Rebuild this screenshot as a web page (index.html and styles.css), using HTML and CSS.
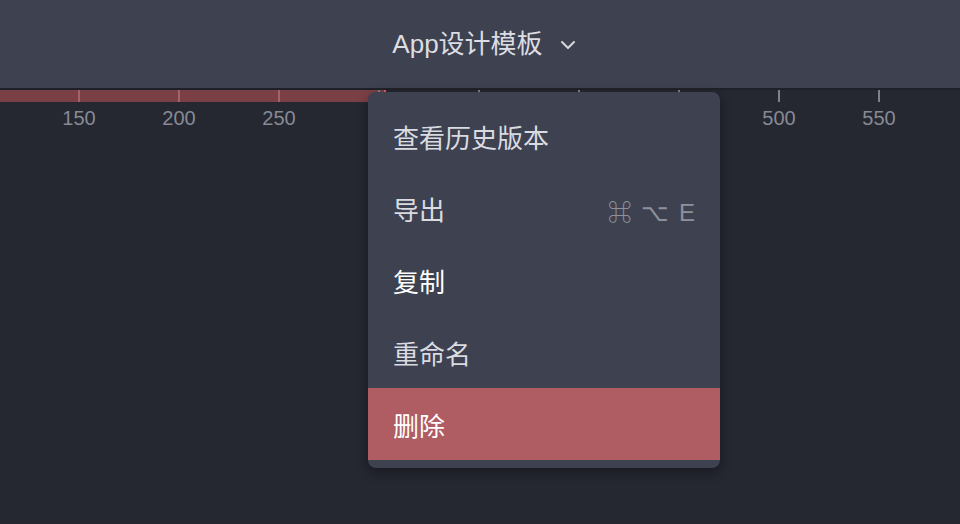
FILE: index.html
```html
<!DOCTYPE html>
<html lang="zh">
<head>
<meta charset="utf-8">
<link rel="stylesheet" href="styles.css">
</head>
<body>
<header class="topbar">
  <div class="doc-title">
    <span class="doc-name">App设计模板</span>
    <svg class="chev" width="16" height="10" viewBox="0 0 16 10"><path d="M2 2l6 6 6-6" fill="none" stroke="#d6d7dc" stroke-width="2" stroke-linecap="round" stroke-linejoin="round"/></svg>
  </div>
</header>
<div class="ruler">
  <div class="sel-band"></div>
  <div class="ruler-cells">
    <div class="cell"><i class="tick"></i><span>150</span></div>
    <div class="cell"><i class="tick"></i><span>200</span></div>
    <div class="cell"><i class="tick"></i><span>250</span></div>
    <div class="cell covered"><i class="tick"></i><span>300</span></div>
    <div class="cell covered"><i class="tick"></i><span>350</span></div>
    <div class="cell covered"><i class="tick"></i><span>400</span></div>
    <div class="cell covered"><i class="tick"></i><span>450</span></div>
    <div class="cell"><i class="tick"></i><span>500</span></div>
    <div class="cell"><i class="tick"></i><span>550</span></div>
  </div>
</div>
<div class="menu">
  <div class="item">查看历史版本</div>
  <div class="item"><span>导出</span><span class="kbd">⌘ ⌥ E</span></div>
  <div class="item bright">复制</div>
  <div class="item">重命名</div>
  <div class="item danger">删除</div>
</div>
</body>
</html>
```
FILE: styles.css
```css
html, body {
  margin: 0;
  padding: 0;
}
body {
  width: 960px;
  height: 524px;
  overflow: hidden;
  background: #252731;
  font-family: "Liberation Sans", "Noto Sans CJK SC", sans-serif;
  position: relative;
}
.topbar {
  height: 88px;
  background: #3d4150;
  border-bottom: 2px solid #1f2129;
  display: flex;
  align-items: center;
  justify-content: center;
}
.doc-title {
  display: flex;
  align-items: center;
  gap: 17px;
  margin-left: 8px;
  color: #dcdde2;
  font-size: 26px;
}
.doc-name {
  line-height: 30px;
}
.chev {
  margin-top: 2px;
}
.ruler {
  position: relative;
  height: 60px;
}
.sel-band {
  position: absolute;
  left: 0;
  top: 0;
  width: 384px;
  height: 12px;
  background: #7b4046;
  border-right: 2px solid #e15c5f;
}
.ruler-cells {
  display: flex;
  padding-left: 29px;
  position: relative;
}
.cell {
  width: 100px;
  flex: none;
  display: flex;
  flex-direction: column;
  align-items: center;
}
.tick {
  display: block;
  width: 2px;
  height: 12px;
  background: #7e818b;
}
.cell:nth-child(-n+3) .tick {
  background: #a5626a;
}
.cell span {
  margin-top: 4px;
  font-size: 20px;
  color: #878a94;
  line-height: 24px;
}
.cell.covered span {
  visibility: hidden;
}
.menu {
  position: absolute;
  left: 368px;
  top: 92px;
  width: 352px;
  padding: 8px 0;
  background: #3d4150;
  border-radius: 8px;
  box-shadow: 0 4px 12px rgba(0, 0, 0, 0.35);
}
.item {
  height: 72px;
  padding: 0 25px;
  display: flex;
  align-items: center;
  justify-content: space-between;
  font-size: 26px;
  color: #dadbe0;
}
.item.bright {
  color: #ffffff;
}
.kbd {
  font-size: 24px;
  word-spacing: 3px;
  color: #8e919b;
  margin-top: 4px;
}
.item.danger {
  background: #b05c63;
  color: #ffffff;
}
```
